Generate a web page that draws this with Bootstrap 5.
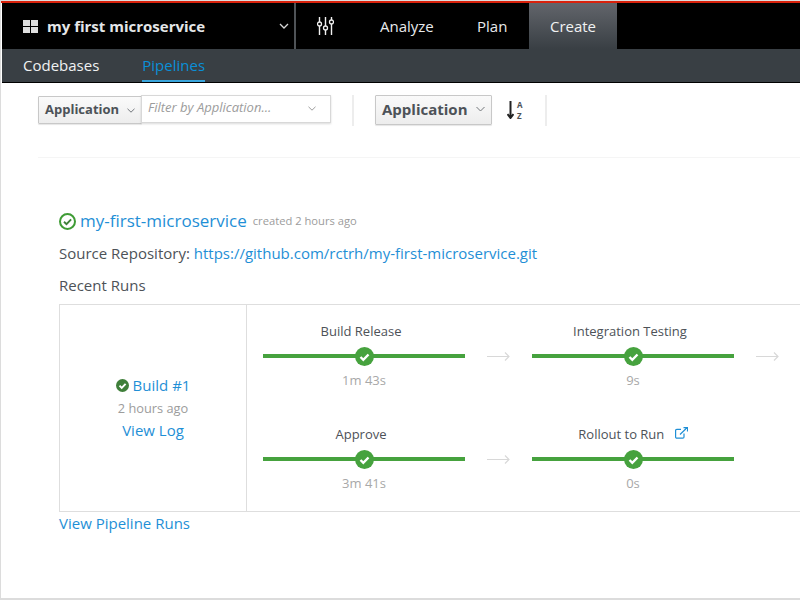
<!DOCTYPE html>
<html lang="en">
<head>
<meta charset="utf-8">
<title>Pipelines</title>
<link href="https://cdn.jsdelivr.net/npm/bootstrap@5.3.0/dist/css/bootstrap.min.css" rel="stylesheet">
<style>
html,body{margin:0;height:600px;overflow:hidden;background:#fff}
body{font-family:"Open Sans","Liberation Sans",sans-serif;color:#4d5258;font-size:15px}
.frame{width:800px;height:600px;overflow:hidden;display:flex;flex-direction:column;border:solid #dcdcdc;border-width:1px 0 2px 1px}
.redline{height:2px;background:#d9220c;flex:none}
.topbar{height:46px;background:#000;flex:none;margin-left:1px}
.brand{width:294px;height:46px;border-right:2px solid #4f5357;padding:0 5px 0 21px;color:#e4e6e8;font-weight:700;font-size:15px}
.brand-name{margin-left:9px}
.tuner{width:84px;padding-left:21px}
.topbar .navbar-nav .toplink{padding:0}
.toplink{color:#e8eaec;font-size:15px;height:46px;line-height:46px}
.analyze{width:97px}
.plan{width:52px}
.create{width:88px;text-align:center;background:linear-gradient(#62656b,#393f44);color:#f1f2f3!important}
.subbar{height:34px;background:#393f44;border-bottom:1px solid #000;flex:none;margin-left:1px;padding-left:21px;gap:43px}
.sublink{font-size:15px;line-height:33px;height:33px;color:#f0f1f2;padding:0}
.sublink.on{color:#0a8fd8;border-bottom:2px solid #39a5dc}
.tools{height:75px;margin-left:37px;border-bottom:1px solid #f5f5f5;padding-top:12px;flex:none;align-items:flex-start}
.pickbtn{background:linear-gradient(#fafafa,#ededed);border:1px solid #c8c8c8;border-radius:1px;box-shadow:0 1px 1px rgba(0,0,0,.1);color:#4d5258;font-weight:700;padding:0;display:flex;align-items:center}
.pick1{width:104px;height:28px;margin-top:1px;font-size:13px;padding-left:6px}
.pick2{width:117px;height:30px;font-size:15px;padding:0 0 2px 6px}
.filterbox{width:190px;height:28px;border:1px solid #d8d8d8;box-shadow:0 1px 2px rgba(0,0,0,.15);display:flex;align-items:center;justify-content:space-between;padding:0 14px 2px 6px;font-style:italic;color:#9c9c9c;font-size:13px;margin-left:-1px;background:#fff}
.vsep{width:2px;height:31px;background:#ededed}
.sep1{margin:0 21px 0 21px}
.sortico{margin:0 20px 0 15px;height:30px;width:18px;display:flex;align-items:center}
.azwrap{display:flex;flex-direction:column;font-size:8px;line-height:11px;font-weight:700;color:#4d5258;margin-left:3px}
.body-wrap{padding:52px 0 0 58px;width:1000px}
.pipe-head{height:22px;line-height:22px}
.pipe-head a{font-size:17px;margin:0 6px 0 4px}
.quiet{color:#9c9c9c;font-size:11.2px}
a.lnk{color:#1f8fd6;text-decoration:none}
.srcline{margin-top:10px;line-height:22px;height:22px}
.recent{margin-top:10px;line-height:22px;height:22px;margin-bottom:8px}
.runbox{border:1px solid #dedede;height:208px;width:1000px;display:flex}
.runleft{width:187px;border-right:1px solid #dedede;text-align:center;display:flex;flex-direction:column;justify-content:center}
.runleft a{font-size:15px;line-height:23px}
.runleft .ago{font-size:12.800px;line-height:22px;color:#9c9c9c}
.runright{padding:15px 0 0 16px}
.stagerow{display:flex;height:103px}
.stage{width:202px;text-align:center}
.stage-name{font-size:13px;line-height:22px;height:24px;color:#4d5258;padding-right:6px}
.stage-name.ext{padding-right:0}
.stage-bar{height:25px;position:relative;display:flex;align-items:center;justify-content:center}
.stage-bar::before{content:"";position:absolute;left:0;right:0;top:10px;height:4px;background:#46a23e}
.stage-bar svg{position:relative}
.stage-time{font-size:13px;line-height:20px;color:#a8a8a8;margin-top:1px}
.arrowcell{width:67px;height:25px;margin-top:24px;display:flex;justify-content:center;align-items:center}
.extico{margin-left:7px;vertical-align:0}
.morelink{display:block;line-height:22px;font-size:15px}
</style>
</head>
<body>
<div class="frame">
  <div class="redline"></div>
  <nav class="navbar navbar-expand topbar p-0 flex-nowrap justify-content-start">
    <div class="brand d-flex align-items-center justify-content-between">
      <span class="d-flex align-items-center">
        <svg width="15" height="13" viewBox="0 0 15 13"><rect y="0" width="7" height="6" fill="#e0e0e0"/><rect x="8" y="0" width="7" height="6" fill="#e0e0e0"/><rect y="7" width="7" height="6" fill="#e0e0e0"/><rect x="8" y="7" width="7" height="6" fill="#e0e0e0"/></svg>
        <span class="brand-name">my first microservice</span>
      </span>
      <svg width="10" height="6" viewBox="0 0 10 6"><path d="M1 1l4 4 4-4" fill="none" stroke="#d8d8d8" stroke-width="1.3"/></svg>
    </div>
    <div class="tuner d-flex align-items-center">
      <svg width="17" height="18" viewBox="0 0 17 18" fill="none" stroke="#f0f0f0"><path d="M2.5 0v18M8.500 0v18M14.500 0v18" stroke-width="1.4"/><circle cx="2.500" cy="7" r="2" fill="#000" stroke-width="1.300"/><circle cx="8.500" cy="11" r="2" fill="#000" stroke-width="1.300"/><circle cx="14.500" cy="5" r="2" fill="#000" stroke-width="1.300"/></svg>
    </div>
    <ul class="navbar-nav">
      <li class="nav-item"><a class="nav-link toplink analyze" href="#">Analyze</a></li>
      <li class="nav-item"><a class="nav-link toplink plan" href="#">Plan</a></li>
      <li class="nav-item"><a class="nav-link toplink create" href="#">Create</a></li>
    </ul>
  </nav>
  <div class="subbar nav">
    <a class="nav-link sublink" href="#">Codebases</a>
    <a class="nav-link sublink on" href="#">Pipelines</a>
  </div>
  <div class="tools d-flex">
    <button class="pickbtn pick1" type="button">Application
      <svg class="ms-2" width="8" height="5" viewBox="0 0 8 5"><path d="M.5.800L4 4.200 7.500.800" fill="none" stroke="#72767b"/></svg>
    </button>
    <div class="filterbox"><span>Filter by Application...</span>
      <svg width="8" height="5" viewBox="0 0 8 5"><path d="M.5.800L4 4.200 7.500.800" fill="none" stroke="#9c9c9c"/></svg>
    </div>
    <div class="vsep sep1"></div>
    <button class="pickbtn pick2" type="button">Application
      <svg class="ms-2" width="9" height="6" viewBox="0 0 9 6"><path d="M.5 1L4.500 5 8.500 1" fill="none" stroke="#72767b"/></svg>
    </button>
    <div class="sortico">
      <svg width="7" height="18" viewBox="0 0 7 18"><path d="M3.500 0v16M.5 13l3 4 3-4" fill="none" stroke="#222" stroke-width="2"/></svg>
      <span class="azwrap"><span>A</span><span>Z</span></span>
    </div>
    <div class="vsep"></div>
  </div>
  <div class="body-wrap">
    <div class="pipe-head d-flex align-items-center">
      <svg width="17" height="17" viewBox="0 0 17 17"><circle cx="8.500" cy="8.500" r="7.500" fill="#fff" stroke="#3f9c35" stroke-width="2"/><path d="M5 8.700l2.500 2.400 4.600-4.800" fill="none" stroke="#3f7f3a" stroke-width="1.900"/></svg>
      <a class="lnk" href="#">my-first-microservice</a><span class="quiet">created 2 hours ago</span>
    </div>
    <div class="srcline">Source Repository: <a class="lnk" href="#">https://github.com/rctrh/my-first-microservice.git</a></div>
    <div class="recent">Recent Runs</div>
    <div class="runbox">
      <div class="runleft">
        <div class="d-flex align-items-center justify-content-center">
          <svg class="me-1" width="13" height="13" viewBox="0 0 13 13"><circle cx="6.500" cy="6.500" r="6.500" fill="#3f7f3a"/><path d="M3.500 6.700l2.200 2.200 3.900-4.100" fill="none" stroke="#fff" stroke-width="1.900"/></svg>
          <a class="lnk" href="#">Build #1</a>
        </div>
        <div class="ago">2 hours ago</div>
        <a class="lnk" href="#">View Log</a>
      </div>
      <div class="runright">
        <div class="stagerow">
          <div class="stage">
            <div class="stage-name">Build Release</div>
            <div class="stage-bar"><svg width="19" height="19" viewBox="0 0 19 19"><circle cx="9.500" cy="9.500" r="9.500" fill="#46a23e"/><path d="M5.500 10l2.800 2.800 5.200-5.300" fill="none" stroke="#fff" stroke-width="2.400"/></svg></div>
            <div class="stage-time">1m 43s</div>
          </div>
          <div class="arrowcell"><svg width="23" height="9" viewBox="0 0 23 9"><path d="M0 4.500h22M18 .5l4 4-4 4" fill="none" stroke="#d8d8d8" stroke-width="1.200"/></svg></div>
          <div class="stage">
            <div class="stage-name">Integration Testing</div>
            <div class="stage-bar"><svg width="19" height="19" viewBox="0 0 19 19"><circle cx="9.500" cy="9.500" r="9.500" fill="#46a23e"/><path d="M5.500 10l2.800 2.800 5.200-5.300" fill="none" stroke="#fff" stroke-width="2.400"/></svg></div>
            <div class="stage-time">9s</div>
          </div>
          <div class="arrowcell"><svg width="23" height="9" viewBox="0 0 23 9"><path d="M0 4.500h22M18 .5l4 4-4 4" fill="none" stroke="#d8d8d8" stroke-width="1.200"/></svg></div>
        </div>
        <div class="stagerow">
          <div class="stage">
            <div class="stage-name">Approve</div>
            <div class="stage-bar"><svg width="19" height="19" viewBox="0 0 19 19"><circle cx="9.500" cy="9.500" r="9.500" fill="#46a23e"/><path d="M5.500 10l2.800 2.800 5.200-5.300" fill="none" stroke="#fff" stroke-width="2.400"/></svg></div>
            <div class="stage-time">3m 41s</div>
          </div>
          <div class="arrowcell"><svg width="23" height="9" viewBox="0 0 23 9"><path d="M0 4.500h22M18 .5l4 4-4 4" fill="none" stroke="#d8d8d8" stroke-width="1.200"/></svg></div>
          <div class="stage">
            <div class="stage-name ext">Rollout to Run <svg class="extico" width="13" height="12" viewBox="0 0 13 12" fill="none" stroke="#1f8fd6" stroke-width="1.200"><path d="M9 6.500V10a1.200 1.200 0 0 1-1.200 1.200H1.800A1.200 1.200 0 0 1 .6 10V3.600a1.200 1.200 0 0 1 1.200-1.200H6"/><path d="M5 7.500L12 .8M8.500.6h4v4"/></svg></div>
            <div class="stage-bar"><svg width="19" height="19" viewBox="0 0 19 19"><circle cx="9.500" cy="9.500" r="9.500" fill="#46a23e"/><path d="M5.500 10l2.800 2.800 5.200-5.300" fill="none" stroke="#fff" stroke-width="2.400"/></svg></div>
            <div class="stage-time">0s</div>
          </div>
        </div>
      </div>
    </div>
    <a class="lnk morelink" href="#">View Pipeline Runs</a>
  </div>
</div>
</body>
</html>
